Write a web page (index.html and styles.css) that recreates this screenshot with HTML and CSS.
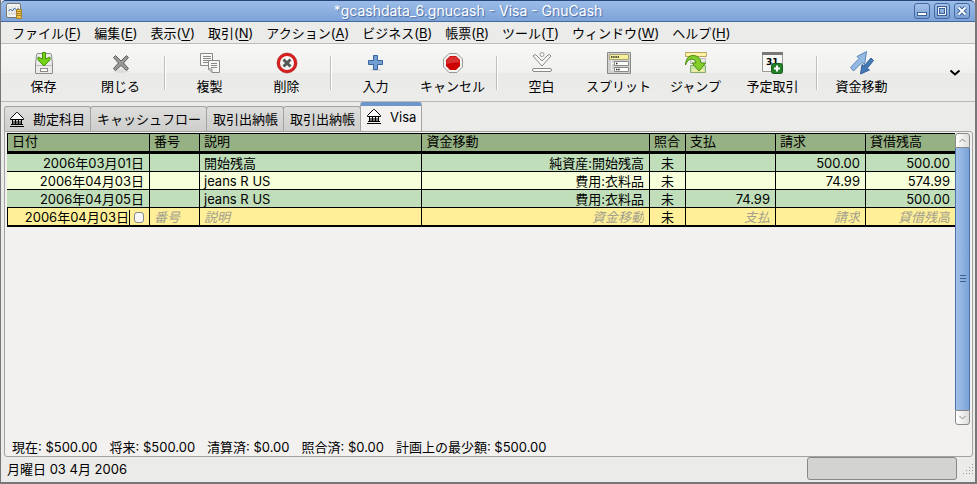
FILE: index.html
```html
<!DOCTYPE html>
<html lang="ja">
<head>
    <meta charset="UTF-8">
    <meta name="viewport" content="width=device-width, initial-scale=1.0">
    <title>*gcashdata_6.gnucash - Visa - GnuCash</title>
    <link rel="stylesheet" href="styles.css">
</head>
<body>
    <header class="titlebar">
        <svg class="app-icon" width="16" height="16" viewBox="0 0 16 16">
            <rect x="0.5" y="0.5" width="14" height="14" rx="1.5" fill="#f4f4f2" stroke="#77776f"/>
            <path d="M3 3v9M6 3v9M9 3v9M12 3v9M3 11h9" stroke="#d4d4d0" fill="none"/>
            <path d="M2.5 8l2-2 2 2 2-3 2 2 2-2" stroke="#3d6db5" fill="none"/>
            <path d="M10.500 6.500h5v9h-5z" fill="#edc648" stroke="#a9822a"/>
            <path d="M11 8.500h4M11 10.500h4M11 12.500h4" stroke="#a9822a"/>
        </svg>
        <h1 class="title">*gcashdata_6.gnucash - Visa - GnuCash</h1>
        <div class="window-buttons">
            <button aria-label="最小化"><svg width="10" height="10"><rect x="0.500" y="6.500" width="9" height="3" fill="#fff" stroke="#3c629a"/></svg></button>
            <button aria-label="最大化"><svg width="10" height="10"><path d="M1.500 1.500h7v7h-7z" fill="none" stroke="#3c629a" stroke-width="3"/><path d="M1.500 1.500h7v7h-7z" fill="none" stroke="#fff"/></svg></button>
            <button aria-label="閉じる"><svg width="10" height="10"><path d="M1.500 1.500l7 7M8.500 1.500l-7 7" stroke="#3c629a" stroke-width="4"/><path d="M1.500 1.500l7 7M8.500 1.500l-7 7" stroke="#fff" stroke-width="2"/></svg></button>
        </div>
    </header>

    <nav class="menubar">
        <button>ファイル(<u>F</u>)</button>
        <button>編集(<u>E</u>)</button>
        <button>表示(<u>V</u>)</button>
        <button>取引(<u>N</u>)</button>
        <button>アクション(<u>A</u>)</button>
        <button>ビジネス(<u>B</u>)</button>
        <button>帳票(<u>R</u>)</button>
        <button>ツール(<u>T</u>)</button>
        <button>ウィンドウ(<u>W</u>)</button>
        <button>ヘルプ(<u>H</u>)</button>
    </nav>

    <div class="toolbar">
        <button class="tool">
            <svg width="24" height="24" viewBox="0 0 24 24">
                <path d="M4.500 3.500Q4.500 2.500 6 2.500h12q1.500 0 1.500 1L20.500 14v8q0 .5-.5.500H4q-.5 0-.5-.5v-8z" fill="#ececea" stroke="#8c8c88"/>
                <path d="M4 14.500h16" stroke="#bbb"/>
                <rect x="8.500" y="17.500" width="7" height="3" fill="#fff" stroke="#8c8c88"/>
                <path d="M10.500 1.500h3V8L18 6v3l-6 6-6-6V6l4.500 2z" fill="#73d216" stroke="#43940a"/>
            </svg>
            <span>保存</span>
        </button>
        <button class="tool">
            <svg width="24" height="24" viewBox="0 0 24 24">
                <ellipse cx="12" cy="20" rx="8" ry="2" fill="#dededc"/>
                <path d="M4.500 6.500l2-2 5.500 5.500 5.500-5.500 2 2-5 5.500 5 5.500-2 2-5.500-5-5.500 5-2-2 5-5.500z" fill="#999a96" stroke="#5f605c" stroke-linejoin="round"/>
            </svg>
            <span>閉じる</span>
        </button>
        <div class="separator"></div>
        <button class="tool">
            <svg width="24" height="24" viewBox="0 0 24 24">
                <path d="M2.500 2.500h12v12h-12z" fill="#f8f8f7" stroke="#888a85"/>
                <path d="M5 5.500h8M5 7.500h8M5 9.500h6M5 11.500h5" stroke="#888a85"/>
                <path d="M10.500 9.500h11v12H14l-3.500-3.500z" fill="#f8f8f7" stroke="#888a85"/>
                <path d="M13 12.500h6M13 14.500h6M13 16.500h6M10.500 18H14v3.500" fill="none" stroke="#888a85"/>
            </svg>
            <span>複製</span>
        </button>
        <button class="tool">
            <svg width="24" height="24" viewBox="0 0 24 24">
                <circle cx="12" cy="12" r="8.500" fill="#f7f7f6" stroke="#d61f1f" stroke-width="3"/>
                <circle cx="12" cy="12" r="10" fill="none" stroke="#a40000" stroke-width="0.500"/>
                <path d="M8.500 8.500l7 7M15.500 8.500l-7 7" stroke="#555753" stroke-width="3"/>
            </svg>
            <span>削除</span>
        </button>
        <div class="separator"></div>
        <button class="tool">
            <svg width="24" height="24" viewBox="0 0 24 24">
                <ellipse cx="12" cy="19" rx="6" ry="1" fill="#d9d9d7"/>
                <path d="M9.500 4.500h4v5h5v4h-5v5h-4v-5h-5v-4h5z" fill="#729fcf" stroke="#3465a4" stroke-linejoin="round"/>
            </svg>
            <span>入力</span>
        </button>
        <button class="tool">
            <svg width="24" height="24" viewBox="0 0 24 24">
                <path d="M8 2.500h8l5.500 5.500v8L16 21.500H8L2.500 16V8z" fill="#f2f2f0" stroke="#999a96"/>
                <path d="M9 5h6l4 4v6l-4 4H9l-4-4V9z" fill="#cc0000"/>
                <path d="M9.500 5.500h5l4 4v2Q12 11 5.500 13V9.500z" fill="#d93030"/>
            </svg>
            <span>キャンセル</span>
        </button>
        <div class="separator"></div>
        <button class="tool">
            <svg width="24" height="24" viewBox="0 0 24 24">
                <circle cx="12" cy="3.500" r="2" fill="#fafafa" stroke="#999a96"/>
                <path d="M3 5q1-2 3-1l6 6 6-6q2-1 3 1l-9 10z" fill="#fafafa" stroke="#888a85" stroke-linejoin="round"/>
                <rect x="2.500" y="17.500" width="19" height="3" rx="1.500" fill="#fff" stroke="#888a85"/>
            </svg>
            <span>空白</span>
        </button>
        <button class="tool">
            <svg width="24" height="24" viewBox="0 0 24 24">
                <path d="M.5 1.500h23v21H.5z" fill="#d0d0cc" stroke="#888a85"/>
                <path d="M2.500 3.500h19v5h-19z" fill="#f9f19a" stroke="#a5a27c"/>
                <path d="M7.500 10.500h14v4h-14zM7.500 16.500h14v4h-14z" fill="#fff" stroke="#888a85"/>
                <path d="M4 6h8M9 12.500h2M9 18.500h4" stroke="#222" stroke-width="1.500" stroke-dasharray="1.500 .7"/>
                <path d="M4.500 9v10H7M4.500 12.500H7" stroke="#f5f5f5" fill="none"/>
            </svg>
            <span>スプリット</span>
        </button>
        <button class="tool">
            <svg width="24" height="24" viewBox="0 0 24 24">
                <path d="M1.500 1.500h21v4h-21z" fill="#fcf3a5" stroke="#b8a760"/>
                <path d="M6.500 7.500h15v5h-15z" fill="#e5eadf" stroke="#bbb"/>
                <path d="M6.500 14.500h15v7h-15z" fill="#c5e6a8" stroke="#8aab70"/>
                <path d="M8 19.500h12" stroke="#f7f0a2" stroke-width="2"/>
                <path d="M1.500 14Q2 4.500 9 4.500q7 0 8 7.500h4.500l-6.500 8L8 12h4q-.5-4-4-4-4.500 0-6.500 6z" fill="#84cf29" stroke="#4a8c10" stroke-linejoin="round"/>
            </svg>
            <span>ジャンプ</span>
        </button>
        <button class="tool">
            <svg width="24" height="24" viewBox="0 0 24 24">
                <path d="M1.500 1.500h20v19h-20z" fill="#f7f7f6" stroke="#999a96"/>
                <path d="M1 1h21v3H1z" fill="#777975"/>
                <text class="calendar-day" x="5" y="14">31</text>
                <rect x="10.500" y="12.500" width="11" height="10" rx="2" fill="#23812a" stroke="#17601c"/>
                <path d="M16 14.500v6M13 17.500h6" stroke="#fff" stroke-width="2"/>
            </svg>
            <span>予定取引</span>
        </button>
        <div class="separator"></div>
        <button class="tool">
            <svg width="24" height="24" viewBox="0 0 24 24">
                <path d="M16.500.500L7 5.500 9 7.500.5 16.500 3.500 20 12 11.500l2.500 2z" fill="#94b9e2" stroke="#5b86bb" stroke-linejoin="round"/>
                <path d="M10.500 23l1.500-9.500 2 1.500 7-8 2.500 2.500-6.500 8 2.500 1.500z" fill="#4679b4" stroke="#315f9a" stroke-linejoin="round"/>
            </svg>
            <span>資金移動</span>
        </button>
        <button class="overflow" aria-label="その他">
            <svg width="12" height="8" viewBox="0 0 12 8"><path d="M1.500 1.500L6 5.500l4.500-4" fill="none" stroke="#000" stroke-width="2"/></svg>
        </button>
    </div>

    <div class="tabs">
        <button class="tab">
            <svg class="bank" width="14" height="15" viewBox="0 0 14 15"><path d="M.5 6.500L6.500.500h1l6 6v1H.5zM2.500 8v5M5.500 8v5M8.500 8v5M11.500 8v5M4 9v3M7 9v3M10 9v3M1 12.500h12M0 14.500h14"/></svg>
            <span>勘定科目</span>
        </button>
        <button class="tab">キャッシュフロー</button>
        <button class="tab">取引出納帳</button>
        <button class="tab">取引出納帳</button>
        <button class="tab active">
            <svg class="bank" width="14" height="15" viewBox="0 0 14 15"><path d="M.5 6.500L6.500.500h1l6 6v1H.5zM2.500 8v5M5.500 8v5M8.500 8v5M11.500 8v5M4 9v3M7 9v3M10 9v3M1 12.500h12M0 14.500h14"/></svg>
            <span>Visa</span>
        </button>
    </div>

    <main class="page">
        <div class="register">
            <div class="sheet">
                <table>
                    <colgroup>
                        <col class="col-date">
                        <col class="col-num">
                        <col>
                        <col class="col-transfer">
                        <col class="col-reconcile">
                        <col class="col-amount">
                        <col class="col-amount">
                        <col class="col-balance">
                    </colgroup>
                    <thead>
                        <tr><th>日付</th><th>番号</th><th>説明</th><th>資金移動</th><th>照合</th><th>支払</th><th>請求</th><th>貸借残高</th></tr>
                    </thead>
                    <tbody>
                        <tr class="green"><td class="right">2006年03月01日</td><td></td><td>開始残高</td><td class="right">純資産:開始残高</td><td class="center">未</td><td class="right"></td><td class="right">500.00</td><td class="right">500.00</td></tr>
                        <tr class="light"><td class="right">2006年04月03日</td><td></td><td>jeans R US</td><td class="right">費用:衣料品</td><td class="center">未</td><td class="right"></td><td class="right">74.99</td><td class="right">574.99</td></tr>
                        <tr class="green"><td class="right">2006年04月05日</td><td></td><td>jeans R US</td><td class="right">費用:衣料品</td><td class="center">未</td><td class="right">74.99</td><td class="right"></td><td class="right">500.00</td></tr>
                        <tr class="entry">
                            <td><div class="date-cell"><input class="date" type="text" value="2006年04月03日" aria-label="日付"><button class="date-button" aria-label="カレンダー"></button></div></td>
                            <td><input type="text" placeholder="番号" aria-label="番号"></td>
                            <td><input type="text" placeholder="説明" aria-label="説明"></td>
                            <td><input class="right" type="text" placeholder="資金移動" aria-label="資金移動"></td>
                            <td class="center">未</td>
                            <td><input class="right" type="text" placeholder="支払" aria-label="支払"></td>
                            <td><input class="right" type="text" placeholder="請求" aria-label="請求"></td>
                            <td><input class="right" type="text" placeholder="貸借残高" aria-label="貸借残高"></td>
                        </tr>
                    </tbody>
                </table>
            </div>
            <div class="scrollbar">
                <button class="up" aria-label="上へ"><svg width="7" height="5"><path d="M.5 4l3-3 3 3" fill="none" stroke="#888"/></svg></button>
                <div class="thumb"><svg width="6" height="8"><path d="M0 .5h6M0 3.500h6M0 6.500h6" stroke="#3b608f"/></svg></div>
                <button class="down" aria-label="下へ"><svg width="7" height="5"><path d="M.5 1l3 3 3-3" fill="none" stroke="#888"/></svg></button>
            </div>
        </div>
        <div class="summary">
            <span>現在: $500.00</span>
            <span>将来: $500.00</span>
            <span>清算済: $0.00</span>
            <span>照合済: $0.00</span>
            <span>計画上の最少額: $500.00</span>
        </div>
    </main>

    <footer class="statusbar">
        <span class="status-text">月曜日 03 4月 2006</span>
        <div class="progress"></div>
        <svg width="12" height="12"><path d="M10.500 1v11M7.500 4v8M4.500 7v5M1.500 10v2" stroke="#999" stroke-dasharray="1 2"/></svg>
    </footer>
</body>
</html>
```
FILE: styles.css
```css
* {
    box-sizing: border-box;
}
body {
    display: flex;
    flex-direction: column;
    min-height: 100vh;
    margin: 0;
    border: 1px solid #77777a;
    border-width: 0 2px 2px 1px;
    background-color: #ebebe9;
    color: #000;
    font-family: Inter, "Noto Sans CJK JP", sans-serif;
    font-size: 13px;
    line-height: 18px;
}
button {
    margin: 0;
    padding: 0;
    border: none;
    background: none;
    color: inherit;
    font: inherit;
    white-space: nowrap;
}
svg {
    display: block;
    flex: none;
}

/* title bar */
.titlebar {
    display: flex;
    align-items: center;
    height: 22px;
    padding: 0 5px;
    border-top: 1px solid #28457a;
    border-bottom: 1px solid #4668a0;
    border-radius: 5px 5px 0 0;
    background: linear-gradient(#9bbce8, #7da3d8);
}
.title {
    flex: 1;
    margin: 0;
    color: #fff;
    font-size: 14px;
    font-weight: normal;
    text-align: center;
    text-shadow: 1px 1px 1px #456aa3;
}
.window-buttons {
    display: flex;
    gap: 4px;
}
.window-buttons button {
    display: flex;
    align-items: center;
    justify-content: center;
    width: 16px;
    height: 16px;
    border: 1px solid #42689f;
    border-radius: 3px;
    background: linear-gradient(#a5c2ea, #7ba0d4);
}

/* menus */
.menubar {
    display: flex;
    gap: 13px;
    height: 22px;
    padding: 2px 11px;
    border-bottom: 1px solid #bdbdbb;
}
.menubar u {
    text-underline-offset: 2px;
}

/* toolbar */
.toolbar {
    display: flex;
    align-items: center;
    height: 58px;
    padding: 0 4px;
    border-bottom: 1px solid #b9b9b7;
    background: linear-gradient(#f7f7f6, #f0f0ee 50%, #e9e9e7 51%, #ececea);
}
.tool {
    display: flex;
    flex-direction: column;
    align-items: center;
    gap: 2px;
    width: 77px;
}
.separator {
    width: 2px;
    height: 34px;
    margin: 0 5px;
    border-left: 1px solid #bfbfbd;
    border-right: 1px solid #fff;
}
.overflow {
    margin-left: auto;
    padding: 0 10px;
}
.calendar-day {
    font-family: "DejaVu Sans", sans-serif;
    font-size: 9px;
    font-weight: bold;
}

/* tabs */
.tabs {
    display: flex;
    align-items: flex-end;
    height: 29px;
    padding-left: 3px;
}
.tab {
    display: flex;
    align-items: center;
    gap: 9px;
    height: 25px;
    padding: 0 5px;
    border: 1px solid #a3a3a1;
    border-bottom: none;
    border-radius: 3px 3px 0 0;
    background: linear-gradient(#dededc, #cdcdcb);
}
.tab + .tab {
    padding-left: 6px;
    margin-left: -1px;
}
.tab.active {
    height: 29px;
    padding-bottom: 4px;
    border-top: 4px solid #6f96cb;
    background: #f2f1f0;
}
.bank {
    fill: #fff;
    stroke: #000;
}

/* register page */
.page {
    display: flex;
    flex: 1;
    flex-direction: column;
    margin: 0 2px 0 3px;
    padding: 1px 2px 0;
    border: 1px solid #a3a3a1;
    border-radius: 0 3px 3px 3px;
    background: #f2f1f0;
}
.register {
    display: flex;
    flex: 1;
    margin-bottom: 13px;
}
.sheet {
    flex: 1;
}
table {
    width: 100%;
    border-collapse: separate;
    border-spacing: 0;
    border-top: 1px solid #000;
    table-layout: fixed;
}
.col-date {
    width: 143px;
}
.col-num {
    width: 50px;
}
.col-transfer {
    width: 24%;
}
.col-reconcile {
    width: 36px;
}
.col-amount {
    width: 90px;
}
.col-balance {
    width: 89px;
}
th,
td {
    height: 18px;
    padding: 2px 5px 0 4px;
    border-right: 1px solid #000;
    border-bottom: 1px solid #000;
    font-weight: normal;
    line-height: 15px;
    text-align: left;
    white-space: nowrap;
}
th {
    height: 20px;
    padding-top: 0;
    padding-bottom: 2px;
    border-bottom-width: 3px;
    background: #96b183;
}
th:last-child,
td:last-child {
    border-right: none;
}
th:first-child,
.entry td:first-child {
    border-left: 1px solid #000;
}
.right {
    text-align: right;
}
td.center {
    padding-right: 0;
    padding-left: 0;
    text-align: center;
}
.green td {
    background: #bfdeb9;
}
.light td {
    background: #f6ffda;
}
.entry td {
    height: 19px;
    border-bottom-width: 2px;
    background: #ffef98;
}
.entry input {
    display: block;
    width: 100%;
    height: 15px;
    margin: 0;
    padding: 0;
    border: none;
    outline: none;
    background: none;
    color: #000;
    font: inherit;
}
.entry input::placeholder {
    color: #a39f8e;
    font-style: italic;
}
.date-cell {
    display: flex;
    align-items: center;
    gap: 4px;
}
.entry .date {
    flex: 1;
    min-width: 0;
    border-right: 1px solid #000;
    text-align: right;
}
.date-button {
    width: 10px;
    height: 11px;
    border: 1px solid #888;
    border-radius: 3px;
    background: #f8f8f8;
}
.scrollbar {
    display: flex;
    flex-direction: column;
    width: 15px;
}
.scrollbar button,
.thumb {
    display: flex;
    align-items: center;
    justify-content: center;
}
.scrollbar button {
    height: 15px;
    border: 1px solid #888;
    background: linear-gradient(90deg, #fff, #dededc);
}
.scrollbar .up {
    border-radius: 3px 3px 0 0;
}
.scrollbar .down {
    border-radius: 0 0 3px 3px;
}
.thumb {
    flex: 1;
    border-left: 1px solid #4b71a9;
    border-right: 1px solid #4b71a9;
    background: linear-gradient(90deg, #a3c2eb, #7ba2d8);
}
.summary {
    display: flex;
    gap: 12px;
    padding: 0 5px;
}

/* status bar */
.statusbar {
    display: flex;
    align-items: center;
    height: 25px;
    padding: 0 1px 2px 6px;
}
.status-text {
    flex: 1;
}
.progress {
    width: 150px;
    height: 23px;
    margin-right: 5px;
    border: 1px solid #888;
    border-radius: 3px;
    background: #d3d3d1;
}
```
